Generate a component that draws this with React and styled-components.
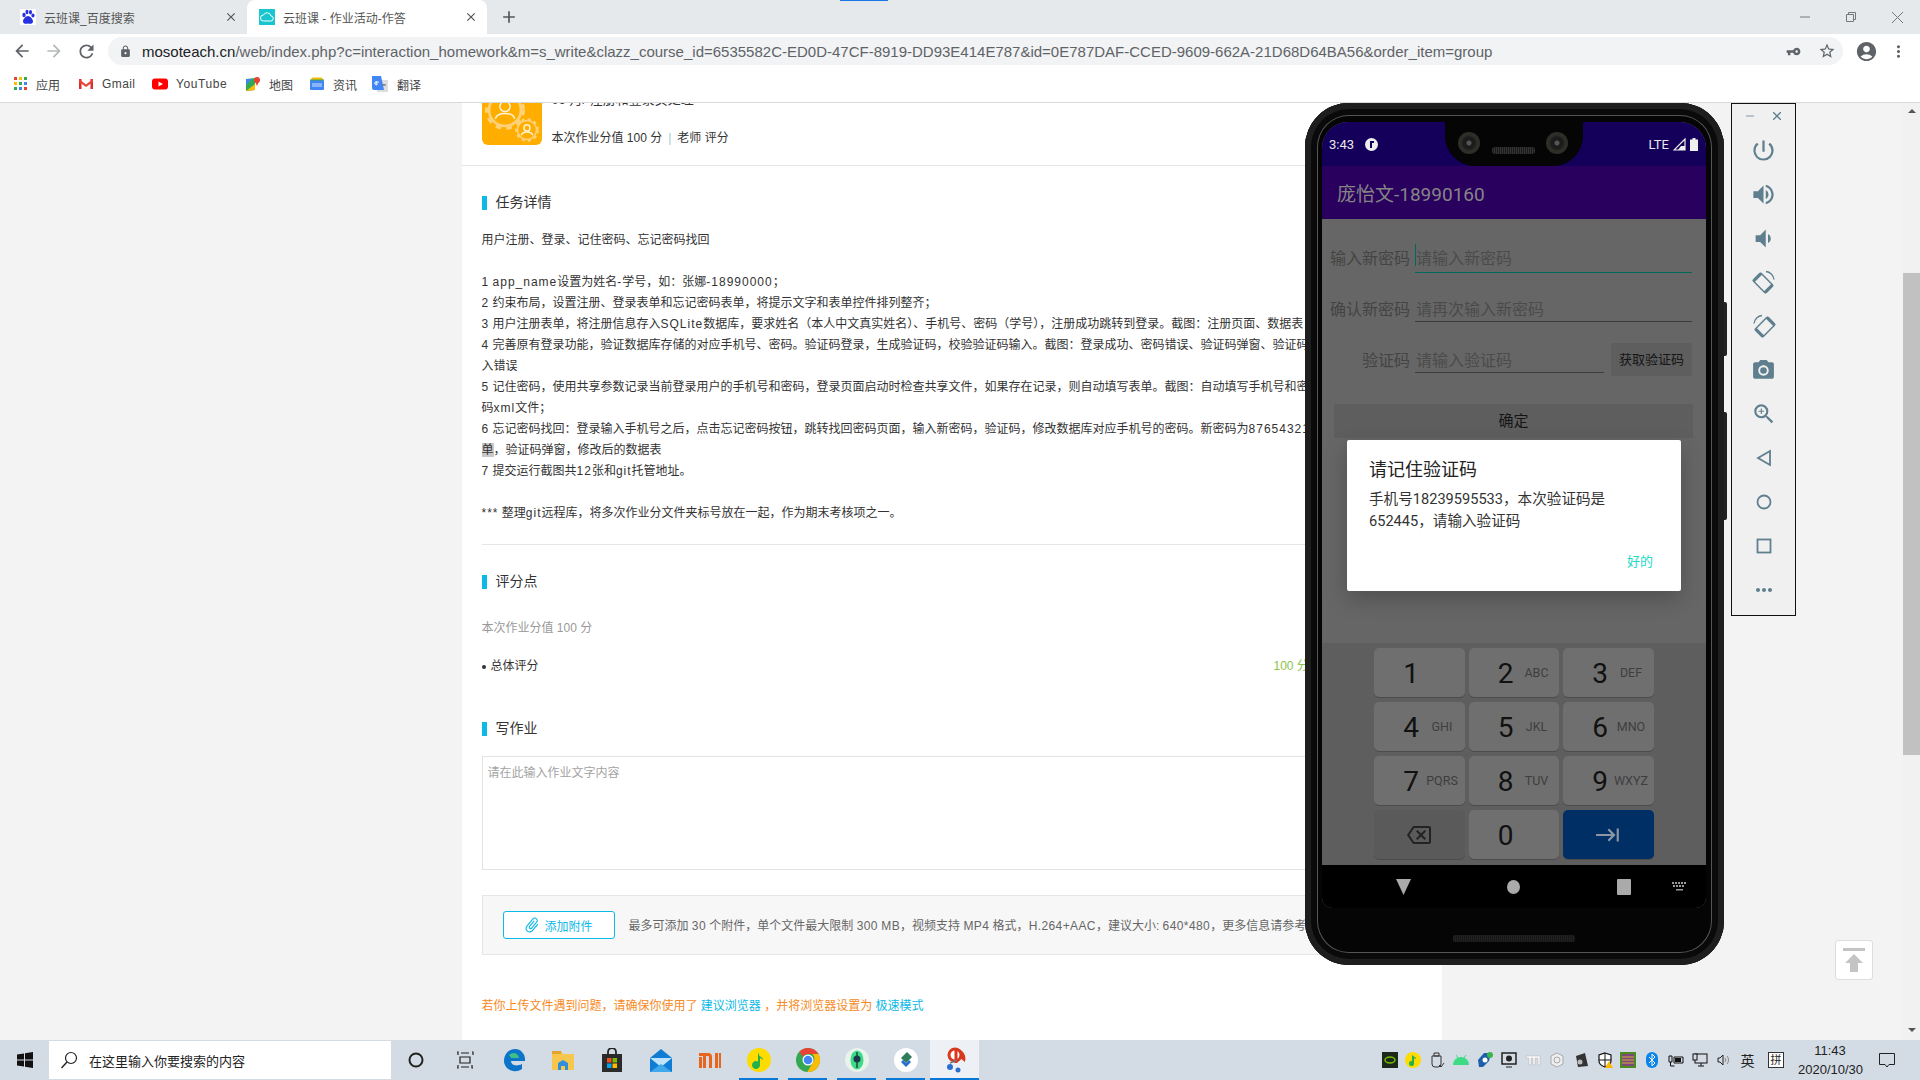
import React from 'react';
import styled, { createGlobalStyle } from 'styled-components';
import {
  MdArrowBack, MdArrowForward, MdRefresh, MdLock, MdVpnKey, MdStarBorder, MdAccountCircle,
  MdMoreVert, MdAdd, MdClose, MdPowerSettingsNew, MdVolumeUp, MdVolumeDown, MdPhotoCamera,
  MdZoomIn, MdMoreHoriz, MdAttachFile, MdOutlineBackspace, MdKeyboardTab,
} from 'react-icons/md';

const CJK = `"Liberation Sans", "Noto Sans CJK SC", sans-serif`;
const ANDROID = `Roboto, "Noto Sans CJK SC", sans-serif`;

const Global = createGlobalStyle`
  html, body { margin: 0; padding: 0; }
  body { font-family: ${CJK}; overflow: hidden; }
`;

const Screen = styled.div`
  width: 1920px;
  height: 1080px;
  display: flex;
  flex-direction: column;
  overflow: hidden;
  position: relative;
`;

// ---- browser chrome
const TabStrip = styled.div`
  height: 34px;
  flex: none;
  background: #e6e9ec;
  display: flex;
  position: relative;
`;
const LoadLine = styled.div`
  position: absolute;
  left: 840px;
  top: 0;
  width: 48px;
  height: 1px;
  background: #1a73e8;
`;
const Tab = styled.div`
  width: ${(p) => p.$w}px;
  height: 34px;
  box-sizing: border-box;
  padding: 0 9px 0 ${(p) => (p.$active ? 12 : 20)}px;
  display: flex;
  align-items: center;
  gap: 8px;
  font-size: 12px;
  color: #555;
  background: ${(p) => (p.$active ? '#fff' : 'transparent')};
  border-radius: 8px 8px 0 0;
  svg { flex: none; }
`;
const TabTitle = styled.span`
  flex: 1;
  white-space: nowrap;
`;
const NewTab = styled.div`
  width: 44px;
  display: flex;
  align-items: center;
  justify-content: center;
  color: #555;
`;
const WinControls = styled.div`
  margin-left: auto;
  display: flex;
  align-items: center;
  color: #777;
`;
const WinBtn = styled.div`
  width: 46px;
  height: 28px;
  display: flex;
  align-items: center;
  justify-content: center;
`;

const ToolRow = styled.div`
  height: 34px;
  flex: none;
  background: #fff;
  display: flex;
  align-items: center;
  color: #5f6368;
`;
const NavBtn = styled.div`
  width: 32px;
  display: flex;
  justify-content: center;
  color: ${(p) => (p.$off ? '#b5b8bb' : '#5f6368')};
  &:first-child { margin-left: 6px; }
`;
const AddressBar = styled.div`
  width: 1735px;
  height: 28px;
  margin-left: 6px;
  box-sizing: border-box;
  background: #f1f3f4;
  border-radius: 14px;
  display: flex;
  align-items: center;
  padding: 0 0 0 11px;
`;
const Url = styled.div`
  margin-left: 10px;
  flex: 1;
  font-size: 15px;
  color: #5f6368;
  white-space: nowrap;
  overflow: hidden;
  b { font-weight: 400; color: #202124; }
`;
const OmniIcon = styled.div`
  width: 33px;
  display: flex;
  justify-content: center;
`;
const Avatar = styled.div`
  width: 32px;
  margin-left: 7px;
  display: flex;
  justify-content: center;
`;

const Bookmarks = styled.div`
  height: 35px;
  flex: none;
  box-sizing: border-box;
  background: #fff;
  border-bottom: 1px solid #d9d9d9;
  display: flex;
  align-items: center;
  padding: 0 0 2px 14px;
`;
const Bookmark = styled.div`
  width: ${(p) => p.$w}px;
  display: flex;
  align-items: center;
  gap: 8px;
  font-size: 12px;
  color: #444;
  white-space: nowrap;
`;

// ---- web page
const PageArea = styled.div`
  flex: 1;
  min-height: 0;
  display: flex;
  background: #f3f3f3;
  position: relative;
  overflow: hidden;
`;
const PageBody = styled.div`
  flex: 1;
  display: flex;
  justify-content: center;
`;
const Card = styled.div`
  width: 980px;
  height: 1000px;
  margin-top: -18px;
  background: #fff;
  flex: none;
  font-size: 12px;
  color: #333;
`;
const HeadRow = styled.div`
  display: flex;
  gap: 10px;
  padding: 0 20px 20px;
  border-bottom: 1px solid #e5e5e5;
`;
const HeadText = styled.div`
  height: 60px;
  display: flex;
  flex-direction: column;
  justify-content: space-between;
`;
const HeadTitle = styled.div`
  font-size: 13px;
  line-height: 30px;
  white-space: nowrap;
`;
const HeadMeta = styled.div`
  line-height: 16px;
  margin-bottom: -1px;
  span { color: #9cc; margin: 0 6px; }
`;
const Inner = styled.div`
  padding: 0 20px;
`;
const Heading = styled.h3`
  margin: ${(p) => p.$top}px 0 0;
  height: 14px;
  border-left: 5px solid #0db9e6;
  padding-left: 9px;
  font-size: 14px;
  font-weight: 400;
  line-height: 12px;
  color: #333;
`;
const Desc = styled.div`
  margin-top: 20px;
  line-height: 21px;
  height: 294px;
  white-space: nowrap;
  mark { background: #c8c8c8; color: inherit; }
`;
const Line = styled.div`
  height: 21px;
`;
const Wide = styled.span`
  letter-spacing: ${(p) => p.$ls || 1}px;
`;
const Divider = styled.div`
  height: 1px;
  margin-top: 20px;
  background: #e5e5e5;
`;
const Muted = styled.div`
  margin-top: 29px;
  line-height: 21px;
  color: #999;
`;
const ScoreRow = styled.div`
  margin-top: 17px;
  line-height: 21px;
  display: flex;
  justify-content: space-between;
  align-items: center;
`;
const ScoreName = styled.div`
  display: flex;
  align-items: center;
  gap: 5px;
  &::before {
    content: '';
    width: 4px;
    height: 4px;
    border-radius: 50%;
    background: #333;
  }
`;
const ScoreValue = styled.div`
  width: 148px;
  color: #8bc34a;
  white-space: nowrap;
`;
const TextBox = styled.div`
  margin-top: 20px;
  height: 114px;
  box-sizing: border-box;
  border: 1px solid #e3e3e3;
  padding: 8px 5px;
  line-height: 16px;
  color: #a3a3a3;
`;
const AttachBar = styled.div`
  margin-top: 25px;
  height: 60px;
  box-sizing: border-box;
  background: #f7f7f7;
  border: 1px solid #e5e5e5;
  padding-left: 20px;
  display: flex;
  align-items: center;
  gap: 14px;
  white-space: nowrap;
  overflow: hidden;
  color: #666;
`;
const AttachNote = styled.div`
  margin-top: -2px;
`;
const AttachBtn = styled.div`
  width: 112px;
  height: 28px;
  flex: none;
  box-sizing: border-box;
  border: 1px solid #0db9e6;
  border-radius: 3px;
  background: #fff;
  color: #0db9e6;
  display: flex;
  align-items: center;
  padding-left: 19px;
  gap: 4px;
`;
const Notice = styled.div`
  margin-top: 41px;
  line-height: 21px;
  color: #f68a1e;
  a { color: #0db9e6; }
`;
const Rail = styled.div`
  width: 17px;
  flex: none;
  background: #f1f1f1;
  display: flex;
  flex-direction: column;
  align-items: center;
`;
const RailArrow = styled.div`
  width: 0;
  height: 0;
  margin-top: ${(p) => p.$mt}px;
  border-left: 4px solid transparent;
  border-right: 4px solid transparent;
  ${(p) => (p.$up ? 'border-bottom: 4px solid #555;' : 'border-top: 4px solid #555;')}
`;
const RailThumb = styled.div`
  width: 100%;
  height: 482px;
  margin-top: 160px;
  background: #c1c1c1;
`;
const BackTop = styled.div`
  position: absolute;
  left: 1835px;
  top: 837px;
  width: 38px;
  height: 40px;
  box-sizing: border-box;
  background: #fff;
  border: 1px solid #ddd;
  border-radius: 3px;
  display: flex;
  align-items: center;
  justify-content: center;
`;

// ---- emulator phone, a window over the page
const Phone = styled.div`
  position: absolute;
  left: 1305px;
  top: 0;
  width: 419px;
  height: 862px;
  box-sizing: border-box;
  padding: 19px 18px 0 17px;
  background: #050505;
  border-radius: 44px;
  box-shadow: inset 0 0 0 6px #1e1e1e, inset 0 0 0 12px #0a0a0a, inset 0 0 0 13px #555;
  font-family: ${ANDROID};
`;
const SideKey = styled.div`
  position: absolute;
  left: 419px;
  top: ${(p) => p.$top}px;
  width: 3px;
  height: ${(p) => p.$h}px;
  background: #222;
  border-radius: 0 2px 2px 0;
`;
const PhoneScreen = styled.div`
  width: 384px;
  height: 786px;
  position: relative;
  border-radius: 26px 26px 10px 10px;
  overflow: hidden;
  display: flex;
  flex-direction: column;
  background: #666;
`;
const StatusBar = styled.div`
  height: 44px;
  flex: none;
  box-sizing: border-box;
  background: #14005a;
  padding: 0 8px 0 7px;
  display: flex;
  align-items: center;
  justify-content: space-between;
  color: #e8e8e8;
  font-size: 13px;
`;
const StatusGroup = styled.div`
  display: flex;
  align-items: center;
  gap: ${(p) => p.$gap}px;
`;
const Notch = styled.div`
  position: absolute;
  left: 123px;
  top: 0;
  width: 138px;
  height: 44px;
  background: #050505;
  border-radius: 0 0 30px 30px;
`;
const Lens = styled.div`
  position: absolute;
  left: ${(p) => p.$x}px;
  top: 10px;
  width: 22px;
  height: 22px;
  border-radius: 50%;
  background: radial-gradient(circle, #555 0 2px, #1c1c1c 3px 6px, #2e2e28 8px);
`;
const Speaker = styled.div`
  position: absolute;
  left: 47px;
  top: 25px;
  width: 43px;
  height: 7px;
  border-radius: 3px;
  background: repeating-linear-gradient(90deg, #333 0 1px, #1c1c1c 1px 2px);
`;
const AppBar = styled.div`
  height: 53px;
  flex: none;
  background: #2a005f;
  box-sizing: border-box;
  padding-left: 15px;
  display: flex;
  align-items: center;
  font-size: 19px;
  color: #858585;
`;
const Form = styled.div`
  height: 424px;
  flex: none;
  position: relative;
  box-sizing: border-box;
  padding-top: 24px;
  background: #666;
`;
const FormRow = styled.div`
  display: grid;
  grid-template-columns: 88px 1fr ${(p) => (p.$btn ? '83px' : '')};
  column-gap: 5px;
  margin: 0 14px ${(p) => p.$mb}px 0;
  align-items: start;
  line-height: ${(p) => p.$lh}px;
  font-size: 16px;
`;
const FieldLabel = styled.div`
  height: 30px;
  text-align: right;
  color: #444;
  white-space: nowrap;
`;
const Field = styled.div`
  height: 30px;
  box-sizing: border-box;
  color: #4b4b4b;
  border-bottom: 1px solid ${(p) => (p.$focus ? '#00695c' : '#3d3d3d')};
  padding-left: 1px;
  position: relative;
`;
const Caret = styled.div`
  position: absolute;
  left: 0;
  top: 1px;
  width: 1px;
  height: 22px;
  background: #00695c;
`;
const CodeBtn = styled.div`
  height: 33px;
  margin-left: 2px;
  background: #5e5e5e;
  border-radius: 2px;
  font-size: 13px;
  line-height: 33px;
  text-align: center;
  color: #151515;
`;
const ConfirmBtn = styled.div`
  margin: 28px 13px 0 12px;
  height: 34px;
  line-height: 34px;
  text-align: center;
  font-size: 15px;
  color: #151515;
  background: #5e5e5e;
  border-radius: 2px;
`;
const Dialog = styled.div`
  position: absolute;
  left: 25px;
  top: 221px;
  width: 334px;
  height: 151px;
  box-sizing: border-box;
  padding: 17px 22px 0;
  background: #fff;
  border-radius: 2px;
  box-shadow: 0 8px 22px rgba(0, 0, 0, 0.22);
`;
const DialogTitle = styled.div`
  font-size: 18px;
  line-height: 26px;
  color: #222;
`;
const DialogText = styled.div`
  margin-top: 6px;
  font-size: 14.6px;
  line-height: 21.5px;
  color: #333;
`;
const DialogAction = styled.div`
  margin-top: 21px;
  padding-right: 6px;
  text-align: right;
  font-size: 13px;
  line-height: 18px;
  color: #1fd9c8;
`;
const Keyboard = styled.div`
  height: 222px;
  flex: none;
  box-sizing: border-box;
  background: #5e5e5e;
  padding: 5px 52px 0;
  display: grid;
  grid-template-columns: repeat(3, 90.5px);
  grid-auto-rows: 49px;
  gap: 5px 4px;
`;
const Key = styled.div`
  background: ${(p) => p.$bg || '#6f6f6f'};
  border-radius: 5px;
  box-shadow: 0 1px 0 #4c4c4c;
  display: flex;
  align-items: center;
  justify-content: ${(p) => (p.$center ? 'center' : 'flex-start')};
  color: ${(p) => p.$color || '#111'};
`;
const Digit = styled.div`
  width: 26px;
  margin: 2px 0 0 24px;
  text-align: center;
  font-size: 28px;
`;
const Letters = styled.div`
  width: 36px;
  text-align: center;
  font-size: 12.5px;
  color: #3e3e3e;
  white-space: nowrap;
`;
const NavBar = styled.div`
  height: 43px;
  flex: none;
  background: #000;
  display: flex;
  align-items: center;
`;
const NavKey = styled.svg`
  margin-left: ${(p) => p.$ml}px;
  flex: none;
`;
const BottomGrille = styled.div`
  width: 122px;
  height: 7px;
  margin: 27px 0 0 131px;
  border-radius: 2px;
  background: repeating-linear-gradient(90deg, #222 0 1px, #161616 1px 2px);
`;

// ---- emulator side toolbar
const EmuBar = styled.div`
  position: absolute;
  left: 1731px;
  top: 0;
  width: 65px;
  height: 513px;
  box-sizing: border-box;
  background: #f0f0f0;
  border: 1px solid #111;
  display: flex;
  flex-direction: column;
  align-items: center;
  color: #5f7f8e;
`;
const EmuTop = styled.div`
  width: 100%;
  height: 24px;
  flex: none;
  box-sizing: border-box;
  padding: 0 14px 0 14px;
  display: flex;
  align-items: center;
  justify-content: space-between;
`;
const EmuBtn = styled.div`
  height: 44px;
  flex: none;
  display: flex;
  align-items: center;
  justify-content: center;
`;

// ---- taskbar
const Taskbar = styled.div`
  height: 40px;
  flex: none;
  background: #d3dbe5;
  display: flex;
  align-items: center;
`;
const StartBtn = styled.div`
  width: 49px;
  display: flex;
  justify-content: center;
`;
const SearchBox = styled.div`
  width: 342px;
  height: 38px;
  box-sizing: border-box;
  background: #fff;
  display: flex;
  align-items: center;
  padding-left: 11px;
  gap: 11px;
  font-size: 13px;
  color: #222;
`;
const TaskSlot = styled.div`
  width: 49px;
  height: 40px;
  flex: none;
  position: relative;
  display: flex;
  align-items: center;
  justify-content: center;
  background: ${(p) => (p.$active ? '#edf1f5' : 'transparent')};
  ${(p) => p.$open && `
    &::after {
      content: '';
      position: absolute;
      left: ${p.$active ? 0 : 5}px;
      right: ${p.$active ? 0 : 5}px;
      bottom: 0;
      height: 2px;
      background: #0a78d7;
    }
  `}
`;
const Tray = styled.div`
  margin-left: auto;
  display: flex;
  align-items: center;
  height: 40px;
  color: #222;
`;
const TraySlot = styled.div`
  width: ${(p) => p.$w || 23.9}px;
  display: flex;
  justify-content: center;
  font-size: ${(p) => p.$fs || 13}px;
`;
const Clock = styled.div`
  width: 64px;
  margin-left: 5px;
  text-align: center;
  font-size: 13px;
  line-height: 19px;
  white-space: nowrap;
  color: #222;
`;
const NotifyBtn = styled.div`
  width: 50px;
  margin-right: 8px;
  display: flex;
  justify-content: center;
`;
const ImeBox = styled.div`
  width: 14px;
  height: 14px;
  border: 1px solid #333;
  background: #fff;
  font-size: 11px;
  line-height: 14px;
  text-align: center;
`;

// ---- drawings
const Svg = ({ s = 16, v = 16, children, ...rest }) => (
  <svg width={s} height={s} viewBox={`0 0 ${v} ${v}`} {...rest}>{children}</svg>
);

const BaiduIcon = () => (
  <Svg>
    <rect width="16" height="16" fill="#fff" />
    <g fill="#2932e1">
      <ellipse cx="4" cy="6" rx="1.7" ry="2.2" />
      <ellipse cx="7" cy="3" rx="1.5" ry="2.2" />
      <ellipse cx="10.5" cy="3.3" rx="1.5" ry="2.2" />
      <ellipse cx="13" cy="6.5" rx="1.6" ry="2.1" />
      <path d="M8 7c-2 0-5 3-5 5.5C3 15 6 15 8 14.5c2 .5 5 .5 5-2C13 10 10 7 8 7z" />
    </g>
  </Svg>
);
const CloudIcon = () => (
  <Svg>
    <rect width="16" height="16" fill="#19c5cf" />
    <path d="M4.500 12a3 3 0 0 1 0-6 4 4 0 0 1 7.500 1 2.500 2.500 0 0 1-.5 5z" fill="none" stroke="#fff" strokeWidth="1" />
  </Svg>
);
const AppsIcon = () => (
  <Svg s={14} v={14}>
    {[0, 5, 10].map((y, r) => [0, 5, 10].map((x, c) => (
      <rect key={`${r}${c}`} x={x} y={y} width="3" height="3" fill={['#ea4335', '#fbbc04', '#34a853', '#4285f4'][(r + c) % 4]} />
    )))}
  </Svg>
);
const GmailIcon = () => (
  <Svg>
    <path d="M1 3h2.500v10H1zM12.500 3H15v10h-2.500z" fill="#d93025" />
    <path d="M1 3l7 5.500L15 3v3L8 11 1 6z" fill="#ea4335" />
  </Svg>
);
const YoutubeIcon = () => (
  <Svg>
    <rect y="2.500" width="16" height="11" rx="3" fill="#f00" />
    <path d="M6.500 5.500v5L11 8z" fill="#fff" />
  </Svg>
);
const MapsIcon = () => (
  <Svg>
    <path d="M1 3l9-1v12l-9 1z" fill="#34a853" />
    <path d="M1 15l9-7v6z" fill="#fbbc04" />
    <path d="M1 3h6L1 9z" fill="#4285f4" />
    <circle cx="12" cy="4" r="3" fill="#ea4335" />
    <path d="M10 5.500L12 10l2-4.500z" fill="#ea4335" />
  </Svg>
);
const NewsIcon = () => (
  <Svg>
    <rect x="1" y="4" width="14" height="10" rx="1" fill="#4285f4" />
    <path d="M2 4l1-2.500h10L14 4z" fill="#fbbc04" />
    <path d="M1 4h14" stroke="#34a853" />
    <rect x="3" y="7" width="10" height="4" fill="#8ab4f8" />
  </Svg>
);
const TranslateIcon = () => (
  <Svg s={18} v={18}>
    <rect x="6" y="5" width="11" height="12" fill="#ddd" />
    <path d="M1 1h9l3 14H3a2 2 0 0 1-2-2z" fill="#4285f4" />
    <path d="M8 7H5v2h1.500a1.500 1.500 0 1 1-.5-2" fill="none" stroke="#fff" />
    <path d="M11 10h4M13 9v1" stroke="#666" />
  </Svg>
);
const Gear = ({ x, y, r }) => (
  <g transform={`translate(${x} ${y})`} fill="none" stroke="#ffd27a">
    <circle r={r} strokeWidth={r / 6} />
    <circle r={r + r / 8} strokeWidth={r / 4} strokeDasharray={`${r / 3} ${r / 3}`} />
    <circle cy={-r * 0.22} r={r * 0.32} strokeWidth="1.500" stroke="#fff3d6" />
    <path d={`M${-r * 0.6} ${r * 0.55}c${r * 0.1} ${-r * 0.45} ${r * 1.1} ${-r * 0.45} ${r * 1.2} 0`} strokeWidth="1.500" stroke="#fff3d6" />
  </g>
);
const HomeworkIcon = () => (
  <svg width="60" height="60" viewBox="0 0 60 60" style={{ flex: 'none', display: 'block' }}>
    <rect width="60" height="60" rx="6" fill="#ffae00" />
    <Gear x={23} y={25} r={16} />
    <Gear x={45} y={45} r={9.500} />
  </svg>
);
const BackTopIcon = () => (
  <Svg s={26} v={26}>
    <rect x="2" y="1" width="22" height="3" fill="#c4c4c4" />
    <path d="M13 7l9 9h-5v9H9v-9H4z" fill="#c4c4c4" />
  </Svg>
);
const RotateIcon = ({ flip }) => (
  <Svg s={26} v={26} style={flip ? { transform: 'scaleX(-1)' } : undefined}>
    <g fill="none" stroke="currentColor">
      <g transform="rotate(-45 12 14)">
        <rect x="6.500" y="5" width="11" height="18" rx="1.500" strokeWidth="1.500" />
        <path d="M6.500 6h11M6.500 22h11" strokeWidth="3" />
      </g>
      <path d="M15 2.500c4 .3 7.500 3.500 8 8" strokeWidth="1.300" />
    </g>
  </Svg>
);
const SignalIcon = () => (
  <Svg s={13} v={13}>
    <path d="M12 1v11H1z" fill="none" stroke="#eee" strokeWidth="1.200" />
    <path d="M8 8h4v4H5z" fill="#eee" />
  </Svg>
);
const BatteryIcon = () => (
  <svg width="8" height="13" viewBox="0 0 8 13"><path d="M2.500 0h3v1.500H8V13H0V1.500h2.500z" fill="#eee" /></svg>
);
const AppDot = () => (
  <Svg s={13} v={13}>
    <circle cx="6.500" cy="6.500" r="6.500" fill="#eee" />
    <path d="M5 3h4v2H7v5H5z" fill="#14005a" />
  </Svg>
);
const KbHide = () => (
  <svg width="15" height="12" viewBox="0 0 15 12" style={{ flex: 'none', marginLeft: 41 }}>
    {[0, 3, 6, 9, 12].map((x) => <rect key={x} x={x} y="1" width="2" height="2" fill="#999" />)}
    {[1, 4, 7, 10].map((x) => <rect key={x} x={x} y="4" width="2" height="2" fill="#999" />)}
    <rect x="4" y="8" width="7" height="1.500" fill="#999" />
  </svg>
);

const WinLogo = () => (
  <Svg><path d="M0 2.500l7-1v6H0zM8 1.300L16 0v7.500H8zM0 8.500h7v6l-7-1zM8 8.500h8V16l-8-1.300z" fill="#111" /></Svg>
);
const SearchGlyph = () => (
  <Svg s={18} v={18}>
    <circle cx="11" cy="7" r="5.500" fill="none" stroke="#222" strokeWidth="1.200" />
    <path d="M7 11l-5.500 6" stroke="#222" strokeWidth="1.400" />
  </Svg>
);
const taskIcons = [
  <Svg s={16}><circle cx="8" cy="8" r="6.500" fill="none" stroke="#222" strokeWidth="2" /></Svg>,
  <Svg s={18} v={18}><path d="M4 6h10v6H4zM1 1h1v3M16 1h1v3M2 14v3h-1M16 14v3h1M5 2h8M5 16h8" fill="none" stroke="#222" strokeWidth="1.200" /></Svg>,
  <Svg s={24} v={24}>
    <path d="M2 13C2 6 7 1 13 1c6 0 10 5 10 10v2H9c0 4 5 6 11 3v5c-3 2-6 2.500-9 2C6 22 2 18 2 13z" fill="#0c74c9" />
    <path d="M7 7c3-3 9-3 10 3H9C8.500 9 8 8 7 7z" fill="#3cc184" />
  </Svg>,
  <Svg s={24} v={24}>
    <path d="M1 3h9l2 3h11v16H1z" fill="#f7c64d" />
    <rect x="1" y="3" width="9" height="3" fill="#e3a32c" />
    <path d="M7 22v-7l5-3 5 3v7h-3v-4h-4v4z" fill="#2f8fdc" />
  </Svg>,
  <Svg s={24} v={24}>
    <path d="M8 7V4a4 4 0 0 1 8 0v3" fill="none" stroke="#222" strokeWidth="1.800" />
    <rect x="2" y="6" width="20" height="18" fill="#2b2b2b" />
    <rect x="7" y="10" width="4.500" height="4.500" fill="#f25022" />
    <rect x="12.500" y="10" width="4.500" height="4.500" fill="#7fba00" />
    <rect x="7" y="15.500" width="4.500" height="4.500" fill="#00a4ef" />
    <rect x="12.500" y="15.500" width="4.500" height="4.500" fill="#ffb900" />
  </Svg>,
  <Svg s={24} v={24}>
    <path d="M12 1L23 10v14H1V10z" fill="#0f7dd3" />
    <path d="M1 10h22L12 19z" fill="#bfe3fa" />
    <path d="M1 24l11-8 11 8z" fill="#42a8ec" />
  </Svg>,
  <Svg s={24} v={24}>
    <path d="M1 5h9a4 4 0 0 1 4 4v11h-3V9a1 1 0 0 0-1-1H8v12H5V8H1zM1 9h3v11H1zM17 5h3v15h-3zM21 5h2v15h-2z" fill="#e9641d" />
  </Svg>,
  <Svg s={24} v={24}>
    <circle cx="12" cy="12" r="12" fill="#ffdc00" />
    <path d="M11 4l1 3c1 2 4 2 4 5-1-1-2-2-3-2v7a4 4 0 1 1-2-3.400z" fill="#22b14c" />
  </Svg>,
  <Svg s={24} v={24}>
    <circle cx="12" cy="12" r="12" fill="#34a853" />
    <path d="M12 0a12 12 0 0 1 10.400 6H12a6 6 0 0 0-5.200 3L3.500 3.500A12 12 0 0 1 12 0z" fill="#ea4335" />
    <path d="M22.400 6a12 12 0 0 1-11 18l5-9a6 6 0 0 0 0-9z" fill="#fbbc04" />
    <circle cx="12" cy="12" r="5.500" fill="#fff" />
    <circle cx="12" cy="12" r="4.300" fill="#4285f4" />
  </Svg>,
  <Svg s={24} v={24}>
    <circle cx="12" cy="12" r="12" fill="#e8f3ec" />
    <ellipse cx="12" cy="12" rx="6.500" ry="9.500" fill="#3ddc84" />
    <circle cx="12" cy="11" r="3.500" fill="#1b3a4b" />
    <path d="M12 4v16" stroke="#1b3a4b" strokeWidth="1.400" />
  </Svg>,
  <Svg s={24} v={24}>
    <circle cx="12" cy="12" r="12" fill="#fff" />
    <path d="M7 10l6-6 5 5-6 6z" fill="#2e7d5b" />
    <path d="M7 14l5 5 5-5-2-2-3 3-3-3z" fill="#2a6fcf" />
  </Svg>,
  <Svg s={28} v={28}>
    <path d="M14 2a11 11 0 0 1 10 14l-5-4a6 6 0 0 0-5-6z" fill="#d9381e" />
    <circle cx="14" cy="9" r="6" fill="#fff" stroke="#d9381e" strokeWidth="3" />
    <path d="M15 3v14" stroke="#d9381e" strokeWidth="3" />
    <circle cx="9" cy="21" r="3" fill="#2a6fcf" />
    <circle cx="17" cy="24" r="2.500" fill="#2a6fcf" />
    <path d="M9 17l7-3" stroke="#777" strokeWidth="1.500" />
  </Svg>,
];
const trayIcons = [
  <Svg><rect width="16" height="16" fill="#1c2a1c" /><ellipse cx="8" cy="8" rx="5" ry="3" fill="none" stroke="#76b900" strokeWidth="1.500" /></Svg>,
  <Svg><circle cx="8" cy="8" r="8" fill="#ffdc00" /><path d="M7 3l4 3v1L9 6v5a2.500 2.500 0 1 1-2-2z" fill="#22b14c" /></Svg>,
  <Svg><path d="M5 1h5v3H5zM3 4h9v8a3 3 0 0 1-3 3H6a3 3 0 0 1-3-3z" fill="none" stroke="#333" /><path d="M10 13l2 2 3-4" fill="none" stroke="#333" /></Svg>,
  <Svg><path d="M0 13a8 8 0 0 1 16 0z" fill="#3ddc84" /><path d="M3 3l2 3M13 3l-2 3" stroke="#3ddc84" /></Svg>,
  <Svg><path d="M1 8l6-7h7l-2 8-6 6H2z" fill="#1f5ea8" /><circle cx="8" cy="8" r="2.500" fill="#fff" /><circle cx="13" cy="3" r="3" fill="#3ab54a" /></Svg>,
  <Svg><rect x="1" y="1" width="14" height="11" fill="none" stroke="#222" strokeWidth="1.500" /><circle cx="8" cy="6.500" r="3" fill="#222" /><path d="M5 15h6" stroke="#222" /></Svg>,
  <Svg><path d="M1 4h14v9h-2V6h-3v7H8V6H6v7H4V6H1z" fill="#fff" stroke="#bbb" strokeWidth=".6" /></Svg>,
  <Svg><path d="M8 1l6 3v8l-6 3-6-3V4z" fill="#eee" stroke="#aaa" /><circle cx="8" cy="8" r="3" fill="none" stroke="#aaa" /></Svg>,
  <Svg><path d="M3 4l9-3 3 13-10 1z" fill="#333" /><circle cx="7" cy="10" r="2.500" fill="#bbb" /></Svg>,
  <Svg><path d="M8 1l6 2v6c0 3-3 5-6 6-3-1-6-3-6-6V3z" fill="#fff" stroke="#111" strokeWidth="1.200" /><path d="M8 1v14M2 8h12" stroke="#111" /><path d="M12 9l4 7H8z" fill="#fcb900" /></Svg>,
  <Svg><rect width="16" height="16" fill="#4c8c1e" /><rect x="2" y="2" width="12" height="12" fill="#7a4a7a" /><path d="M2 5h12M2 8h12M2 11h12" stroke="#d9a93a" /></Svg>,
  <Svg><rect x="2" width="12" height="16" rx="6" fill="#0a84e8" /><path d="M5 5l6 6-3 3V2l3 3-6 6" fill="none" stroke="#fff" /></Svg>,
  <Svg><path d="M1 4h3v6H1zM2.500 10v4h4M6 5h9v6H6z" fill="none" stroke="#111" /><rect x="7" y="6" width="6" height="4" fill="#111" /></Svg>,
  <Svg><rect x="3" y="2" width="12" height="9" fill="none" stroke="#111" /><rect x="1" y="2" width="4" height="6" fill="#d3dbe5" stroke="#111" /><path d="M9 11v3M6 14h6" stroke="#111" /></Svg>,
  <Svg><path d="M2 6h2l3-3v10l-3-3H2z" fill="none" stroke="#222" /><path d="M9 6a3 3 0 0 1 0 4M11 4a6 6 0 0 1 0 8" fill="none" stroke="#888" /></Svg>,
];

const Keys = [
  ['1', ''], ['2', 'ABC'], ['3', 'DEF'],
  ['4', 'GHI'], ['5', 'JKL'], ['6', 'MNO'],
  ['7', 'PQRS'], ['8', 'TUV'], ['9', 'WXYZ'],
];

// latin runs sit wider in the reference's page font
const widen = (text, ls) => text.split(/([A-Za-z0-9_.+*-]+)/).map((part, i) => (
  i % 2 ? <Wide key={i} $ls={ls}>{part}</Wide> : part
));

const taskLines = [
  '用户注册、登录、记住密码、忘记密码找回',
  '',
  '1 app_name设置为姓名-学号，如：张娜-18990000；',
  '2 约束布局，设置注册、登录表单和忘记密码表单，将提示文字和表单控件排列整齐；',
  '3 用户注册表单，将注册信息存入SQLite数据库，要求姓名（本人中文真实姓名）、手机号、密码（学号），注册成功跳转到登录。截图：注册页面、数据表',
  '4 完善原有登录功能，验证数据库存储的对应手机号、密码。验证码登录，生成验证码，校验验证码输入。截图：登录成功、密码错误、验证码弹窗、验证码',
  '入错误',
  '5 记住密码，使用共享参数记录当前登录用户的手机号和密码，登录页面启动时检查共享文件，如果存在记录，则自动填写表单。截图：自动填写手机号和密',
  '码xml文件；',
  '6 忘记密码找回：登录输入手机号之后，点击忘记密码按钮，跳转找回密码页面，输入新密码，验证码，修改数据库对应手机号的密码。新密码为87654321',
  null,
  '7 提交运行截图共12张和git托管地址。',
  '',
  '*** 整理git远程库，将多次作业分文件夹标号放在一起，作为期末考核项之一。',
];

const Browser = () => (
  <>
    <TabStrip>
      <LoadLine />
      <Tab $w={247}><BaiduIcon /><TabTitle>云班课_百度搜索</TabTitle><MdClose size={14} /></Tab>
      <Tab $w={240} $active><CloudIcon /><TabTitle>云班课 - 作业活动-作答</TabTitle><MdClose size={14} /></Tab>
      <NewTab><MdAdd size={20} /></NewTab>
      <WinControls>
        <WinBtn><svg width="10" height="10"><path d="M0 5h10" stroke="#777" /></svg></WinBtn>
        <WinBtn><svg width="10" height="10"><path d="M.5 2.500h7v7h-7zM2.500 2.500v-2h7v7h-2" fill="none" stroke="#777" /></svg></WinBtn>
        <WinBtn><svg width="11" height="11"><path d="M0 0l11 11M11 0L0 11" stroke="#777" /></svg></WinBtn>
      </WinControls>
    </TabStrip>
    <ToolRow>
      <NavBtn><MdArrowBack size={20} /></NavBtn>
      <NavBtn $off><MdArrowForward size={20} /></NavBtn>
      <NavBtn><MdRefresh size={21} /></NavBtn>
      <AddressBar>
        <MdLock size={13} />
        <Url><b>mosoteach.cn</b>/web/index.php?c=interaction_homework&amp;m=s_write&amp;clazz_course_id=6535582C-ED0D-47CF-8919-DD93E414E787&amp;id=0E787DAF-CCED-9609-662A-21D68D64BA56&amp;order_item=group</Url>
        <OmniIcon><MdVpnKey size={15} style={{ transform: 'scaleX(-1)' }} /></OmniIcon>
        <OmniIcon><MdStarBorder size={18} /></OmniIcon>
      </AddressBar>
      <Avatar><MdAccountCircle size={23} /></Avatar>
      <NavBtn><MdMoreVert size={19} /></NavBtn>
    </ToolRow>
    <Bookmarks>
      <Bookmark $w={64}><AppsIcon />应用</Bookmark>
      <Bookmark $w={74}><GmailIcon /><Wide $ls={0.4}>Gmail</Wide></Bookmark>
      <Bookmark $w={93}><YoutubeIcon /><Wide $ls={0.6}>YouTube</Wide></Bookmark>
      <Bookmark $w={64}><MapsIcon />地图</Bookmark>
      <Bookmark $w={62}><NewsIcon />资讯</Bookmark>
      <Bookmark $w={60}><TranslateIcon />翻译</Bookmark>
    </Bookmarks>
  </>
);

const Homework = () => (
  <Card>
    <HeadRow>
      <HomeworkIcon />
      <HeadText>
        <HeadTitle>09 月/ 注册和登录页处理</HeadTitle>
        <HeadMeta>本次作业分值 100 分<span>|</span>老师 评分</HeadMeta>
      </HeadText>
    </HeadRow>
    <Inner>
      <Heading $top={30}>任务详情</Heading>
      <Desc>
        {taskLines.map((t, i) => (
          <Line key={i}>{t === null ? <><mark>单</mark>，验证码弹窗，修改后的数据表</> : widen(t)}</Line>
        ))}
      </Desc>
      <Divider />
      <Heading $top={30}>评分点</Heading>
      <Muted>本次作业分值 100 分</Muted>
      <ScoreRow>
        <ScoreName>总体评分</ScoreName>
        <ScoreValue>100 分</ScoreValue>
      </ScoreRow>
      <Heading $top={45}>写作业</Heading>
      <TextBox>请在此输入作业文字内容</TextBox>
      <AttachBar>
        <AttachBtn><MdAttachFile size={18} style={{ transform: 'rotate(40deg)' }} />添加附件</AttachBtn>
        <AttachNote>{widen('最多可添加 30 个附件，单个文件最大限制 300 MB，视频支持 MP4 格式，H.264+AAC，建议大小: 640*480，更多信息请参考', 0.4)}</AttachNote>
      </AttachBar>
      <Notice>若你上传文件遇到问题，请确保你使用了 <a>建议浏览器</a> ，并将浏览器设置为 <a>极速模式</a></Notice>
    </Inner>
  </Card>
);

const Emulator = () => (
  <Phone>
    <SideKey $top={199} $h={54} />
    <SideKey $top={309} $h={108} />
    <PhoneScreen>
      <StatusBar>
        <StatusGroup $gap={11}>3:43 <AppDot /></StatusGroup>
        <StatusGroup $gap={4}>LTE <SignalIcon /> <BatteryIcon /></StatusGroup>
      </StatusBar>
      <Notch>
        <Lens $x={13} />
        <Lens $x={101} />
        <Speaker />
      </Notch>
      <AppBar>庞怡文-18990160</AppBar>
      <Form>
        <FormRow $mb={19} $lh={31}>
          <FieldLabel>输入新密码</FieldLabel>
          <Field $focus><Caret />请输入新密码</Field>
        </FormRow>
        <FormRow $mb={21} $lh={35}>
          <FieldLabel>确认新密码</FieldLabel>
          <Field>请再次输入新密码</Field>
        </FormRow>
        <FormRow $btn $mb={0} $lh={35}>
          <FieldLabel>验证码</FieldLabel>
          <Field>请输入验证码</Field>
          <CodeBtn>获取验证码</CodeBtn>
        </FormRow>
        <ConfirmBtn>确定</ConfirmBtn>
        <Dialog>
          <DialogTitle>请记住验证码</DialogTitle>
          <DialogText>手机号18239595533，本次验证码是<br />652445，请输入验证码</DialogText>
          <DialogAction>好的</DialogAction>
        </Dialog>
      </Form>
      <Keyboard>
        {Keys.map(([d, l]) => (
          <Key key={d}><Digit>{d}</Digit><Letters>{l}</Letters></Key>
        ))}
        <Key $center $bg="#5a5a5a" $color="#222"><MdOutlineBackspace size={24} /></Key>
        <Key><Digit>0</Digit></Key>
        <Key $center $bg="#002f66" $color="#8c96a5"><MdKeyboardTab size={26} /></Key>
      </Keyboard>
      <NavBar>
        <NavKey $ml={74} width="15" height="16" viewBox="0 0 15 16"><path d="M0 0h15L7.500 16z" fill="#aaa" /></NavKey>
        <NavKey $ml={96} width="13" height="14" viewBox="0 0 13 14"><ellipse cx="6.500" cy="7" rx="6.500" ry="7" fill="#aaa" /></NavKey>
        <NavKey $ml={97} width="14" height="16" viewBox="0 0 14 16"><rect width="14" height="16" rx="1" fill="#aaa" /></NavKey>
        <KbHide />
      </NavBar>
    </PhoneScreen>
    <BottomGrille />
  </Phone>
);

const EmulatorTools = () => (
  <EmuBar>
    <EmuTop>
      <svg width="8" height="8"><path d="M0 4h8" stroke="#7f98a5" /></svg>
      <svg width="8" height="8"><path d="M0 0l8 8M8 0L0 8" stroke="#5f7f8e" strokeWidth="1.300" /></svg>
    </EmuTop>
    <EmuBtn><MdPowerSettingsNew size={27} /></EmuBtn>
    <EmuBtn><MdVolumeUp size={27} /></EmuBtn>
    <EmuBtn><MdVolumeDown size={27} /></EmuBtn>
    <EmuBtn><RotateIcon /></EmuBtn>
    <EmuBtn><RotateIcon flip /></EmuBtn>
    <EmuBtn><MdPhotoCamera size={25} /></EmuBtn>
    <EmuBtn><MdZoomIn size={26} /></EmuBtn>
    <EmuBtn><svg width="16" height="18" viewBox="0 0 16 18"><path d="M14 2v14L2 9z" fill="none" stroke="currentColor" strokeWidth="1.800" /></svg></EmuBtn>
    <EmuBtn><svg width="16" height="16"><circle cx="8" cy="8" r="6.500" fill="none" stroke="currentColor" strokeWidth="1.800" /></svg></EmuBtn>
    <EmuBtn><svg width="16" height="16"><rect x="1.500" y="1.500" width="13" height="13" fill="none" stroke="currentColor" strokeWidth="1.800" /></svg></EmuBtn>
    <EmuBtn><MdMoreHoriz size={24} /></EmuBtn>
  </EmuBar>
);

const WinTaskbar = () => (
  <Taskbar>
    <StartBtn><WinLogo /></StartBtn>
    <SearchBox><SearchGlyph />在这里输入你要搜索的内容</SearchBox>
    {taskIcons.map((ic, i) => (
      <TaskSlot key={i} $open={i >= 7} $active={i === 11}>{ic}</TaskSlot>
    ))}
    <Tray>
      {trayIcons.map((ic, i) => <TraySlot key={i}>{ic}</TraySlot>)}
      <TraySlot $w={23} $fs={14}>英</TraySlot>
      <TraySlot $w={34}><ImeBox>拼</ImeBox></TraySlot>
      <Clock>11:43<br />2020/10/30</Clock>
      <NotifyBtn>
        <svg width="16" height="16" viewBox="0 0 16 16"><path d="M.5 1.500h15v11H10L8 15l-2-2.500H.5z" fill="none" stroke="#222" /></svg>
      </NotifyBtn>
    </Tray>
  </Taskbar>
);

export default function App() {
  return (
    <Screen>
      <Global />
      <Browser />
      <PageArea>
        <PageBody><Homework /></PageBody>
        <Rail>
          <RailArrow $up $mt={6} />
          <RailThumb />
          <RailArrow $mt={273} />
        </Rail>
        <Emulator />
        <EmulatorTools />
        <BackTop><BackTopIcon /></BackTop>
      </PageArea>
      <WinTaskbar />
    </Screen>
  );
}
